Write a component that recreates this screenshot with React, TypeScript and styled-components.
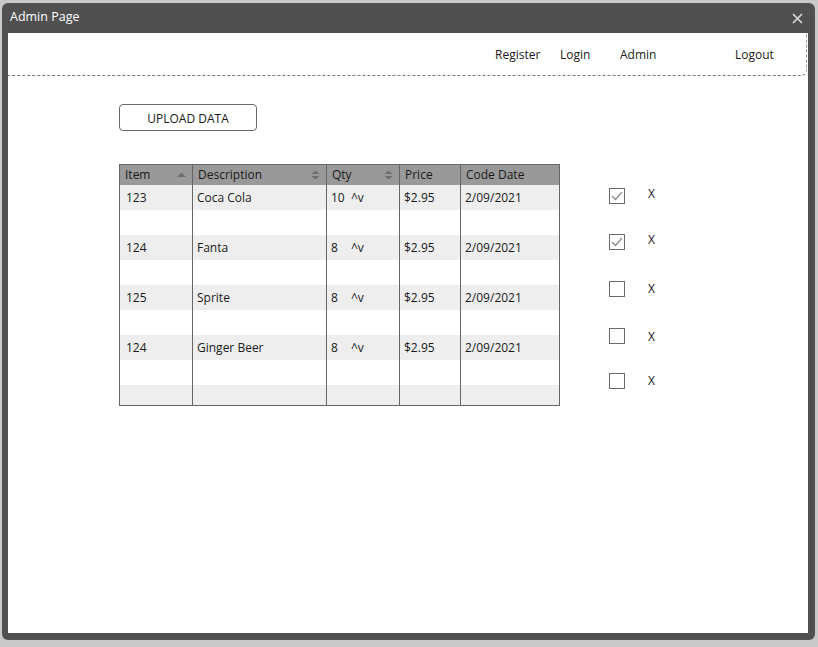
import React from "react";
import styled, { createGlobalStyle } from "styled-components";

const Global = createGlobalStyle`
  html, body { margin: 0; padding: 0; background: #c9c9c9; }
  body { font-family: "Open Sans", "Noto Sans", sans-serif; }
  * { box-sizing: border-box; }
`;

const Page = styled.div`
  width: 818px;
  height: 647px;
  padding: 3px 3px 7px 2px;
`;

const Window = styled.div`
  width: 813px;
  height: 637px;
  background: #505050;
  border-radius: 6px;
  display: flex;
  flex-direction: column;
  padding: 0 7px 7px 6px;
`;

const TitleBar = styled.div`
  height: 30px;
  display: flex;
  align-items: center;
  justify-content: space-between;
  color: #ffffff;
  font-size: 12.5px;
  padding: 0 2px 0 2px;
`;

const Title = styled.span`
  margin-top: -4px;
`;

const Close = styled.svg`
  width: 11px;
  height: 11px;
  margin-right: 3px;
  margin-top: 1px;
`;

const Content = styled.div`
  flex: 1;
  background: #ffffff;
  display: flex;
  flex-direction: column;
`;

const Nav = styled.div`
  height: 43px;
  margin-right: 1px;
  border-bottom: 1px dashed #7a7a7a;
  border-right: 1px dashed #9a9a9a;
  border-bottom-right-radius: 6px;
  display: flex;
  align-items: center;
  padding-left: 487px;
  padding-top: 1px;
  font-size: 12px;
  color: #1a1a1a;
`;

const NavLink = styled.span<{ $w?: number }>`
  width: ${(p) => (p.$w ? `${p.$w}px` : "auto")};
`;

const Main = styled.div`
  padding: 28px 0 0 111px;
  display: flex;
  flex-direction: column;
`;

const UploadButton = styled.button`
  width: 138px;
  height: 27px;
  border: 1px solid #6a6a6a;
  border-radius: 4px;
  background: #ffffff;
  font-family: "Open Sans", "Noto Sans", sans-serif;
  font-size: 12px;
  color: #1a1a1a;
  padding: 2px 0 0 0;
`;

const Row = styled.div`
  display: flex;
  margin-top: 33px;
`;

const Table = styled.div`
  width: 441px;
  height: 242px;
  border: 1px solid #666666;
  display: grid;
  grid-template-columns: 73px 134px 73px 61px 98px;
  grid-template-rows: 20px repeat(8, 25px) 20px;
  overflow: hidden;
  font-size: 12px;
  color: #1a1a1a;
`;

const Head = styled.div<{ $last?: boolean }>`
  background: #999999;
  border-right: ${(p) => (p.$last ? "none" : "1px solid #666666")};
  display: flex;
  align-items: center;
  justify-content: space-between;
  padding: 0 6px 1px 5px;
  color: #1a1a1a;
`;

const Cell = styled.div<{ $shade: boolean; $last?: boolean; $first?: boolean }>`
  background: ${(p) => (p.$shade ? "#eeeeee" : "#ffffff")};
  border-right: ${(p) => (p.$last ? "none" : "1px solid #666666")};
  display: flex;
  align-items: center;
  padding-left: ${(p) => (p.$first ? 6 : 4)}px;
  padding-bottom: 1px;
`;

const QtyNum = styled.span`
  width: 20px;
`;

const Side = styled.div`
  margin-left: 49px;
  padding-top: 24px;
  display: flex;
  flex-direction: column;
`;

const CheckRow = styled.div<{ $h: number }>`
  height: ${(p) => p.$h}px;
  display: flex;
  align-items: flex-start;
`;

const Box = styled.div`
  width: 16px;
  height: 16px;
  border: 1px solid #6b6b6b;
  background: #ffffff;
  display: flex;
  align-items: center;
  justify-content: center;
`;

const XMark = styled.span<{ $dy: number }>`
  margin-left: 23px;
  margin-top: ${(p) => p.$dy}px;
  font-size: 12px;
  color: #1a1a1a;
  line-height: 12px;
`;

const Tri = ({ down = false }: { down?: boolean }) => (
  <svg width="9" height="10" viewBox="0 0 9 10">
    <polygon points={down ? "0.5,4 4.5,0.5 8.5,4" : "0,7 4.5,2.5 9,7"} fill="#6e6e6e" />
    {down && <polygon points="0.5,6 4.5,9.5 8.5,6" fill="#6e6e6e" />}
  </svg>
);

const rows: (string[] | null)[] = [
  ["123", "Coca Cola", "10", "$2.95", "2/09/2021"],
  null,
  ["124", "Fanta", "8", "$2.95", "2/09/2021"],
  null,
  ["125", "Sprite", "8", "$2.95", "2/09/2021"],
  null,
  ["124", "Ginger Beer", "8", "$2.95", "2/09/2021"],
  null,
  null,
];

const checks = [
  { checked: true, h: 46, dy: 0 },
  { checked: true, h: 47, dy: 0 },
  { checked: false, h: 47, dy: 2 },
  { checked: false, h: 45, dy: 3 },
  { checked: false, h: 40, dy: 2 },
];

export default function App() {
  return (
    <Page>
      <Global />
      <Window>
        <TitleBar>
          <Title>Admin Page</Title>
          <Close viewBox="0 0 11 11">
            <path d="M1 1 L10 10 M10 1 L1 10" stroke="#dcdcdc" strokeWidth="1.6" />
          </Close>
        </TitleBar>
        <Content>
          <Nav>
            <NavLink $w={65}>Register</NavLink>
            <NavLink $w={60}>Login</NavLink>
            <NavLink $w={115}>Admin</NavLink>
            <NavLink>Logout</NavLink>
          </Nav>
          <Main>
            <UploadButton>UPLOAD DATA</UploadButton>
            <Row>
              <Table>
                <Head>
                  Item <Tri />
                </Head>
                <Head>
                  Description <Tri down />
                </Head>
                <Head>
                  Qty <Tri down />
                </Head>
                <Head>Price</Head>
                <Head $last>Code Date</Head>
                {rows.map((r, i) =>
                  [0, 1, 2, 3, 4].map((c) => (
                    <Cell key={`${i}-${c}`} $shade={i % 2 === 0} $first={c === 0} $last={c === 4}>
                      {r && c === 2 ? (
                        <>
                          <QtyNum>{r[2]}</QtyNum>^v
                        </>
                      ) : (
                        r && r[c]
                      )}
                    </Cell>
                  ))
                )}
              </Table>
              <Side>
                {checks.map((ch, i) => (
                  <CheckRow key={i} $h={ch.h}>
                    <Box>
                      {ch.checked && (
                        <svg width="12" height="10" viewBox="0 0 12 10">
                          <path d="M1 5 L4.5 8.5 L11 1" stroke="#8a8a8a" strokeWidth="1.2" fill="none" />
                        </svg>
                      )}
                    </Box>
                    <XMark $dy={ch.dy}>X</XMark>
                  </CheckRow>
                ))}
              </Side>
            </Row>
          </Main>
        </Content>
      </Window>
    </Page>
  );
}
